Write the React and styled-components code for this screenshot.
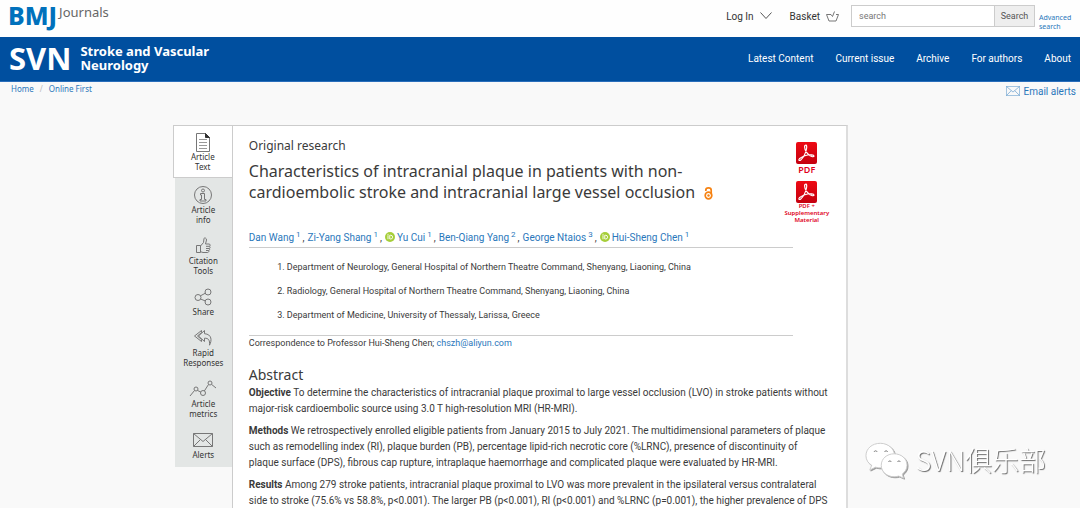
import styled, { createGlobalStyle } from "styled-components";

const GlobalStyle = createGlobalStyle`
  * {
    box-sizing: border-box;
  }

  body {
    margin: 0;
    background-color: #f9f9f9;
    color: #3a3a3a;
    font-family: "Noto Sans", "Open Sans", sans-serif;
    font-size: 11px;
    overflow: hidden;
  }

  a {
    color: #2a77bb;
    text-decoration: none;
  }

  p, h1, h2, ol, ul {
    margin: 0;
    padding: 0;
    font-weight: 400;
  }
`;

// ==========Header==================
const TopBar = styled.header`
  display: flex;
  justify-content: space-between;
  height: 37px;
  padding: 0 4px 0 8px;
  background-color: #fefefe;
`;

const Logo = styled.a`
  display: flex;
  align-items: flex-start;
  gap: 2px;
  line-height: 24px;

  .bmj {
    color: #0071bc;
    font-size: 25px;
    font-weight: 800;
    line-height: 30px;
  }

  .journals {
    color: #666;
    font-size: 13px;
  }
`;

const UserTools = styled.div`
  display: flex;
  align-items: flex-start;
  padding-top: 5px;
`;

const ToolButton = styled.button`
  display: flex;
  align-items: center;
  gap: 6px;
  height: 22px;
  margin-right: ${(props) => props.$space}px;
  padding: 0;
  border: none;
  background: none;
  color: #333;
  font-family: Roboto, sans-serif;
  font-size: 10px;
`;

const SearchForm = styled.form`
  display: flex;
  align-items: flex-start;

  input {
    width: 144px;
    height: 22px;
    padding: 0 7px;
    border: 1px solid #ccc;
    font-family: Roboto, sans-serif;
    font-size: 9px;

    &::placeholder {
      color: #777;
    }
  }

  button {
    width: 40px;
    height: 22px;
    padding: 0;
    border: 1px solid #ccc;
    border-left: none;
    background-color: #eee;
    color: #555;
    font-family: Roboto, sans-serif;
    font-size: 9px;
  }

  a {
    width: 37px;
    margin-left: 4px;
    padding-top: 8px;
    font-size: 7px;
    line-height: 9px;
  }
`;

const JournalBar = styled.div`
  display: flex;
  align-items: center;
  justify-content: space-between;
  height: 45px;
  padding: 0 9px 2px;
  border-bottom: 1px solid #2a6ebb;
  background-color: #004f9f;
  color: #fff;
`;

const JournalName = styled.div`
  display: flex;
  align-items: center;
  gap: 9px;
  font-weight: 700;

  .short {
    font-size: 31px;
    line-height: 40px;
  }

  .full {
    font-size: 13px;
    line-height: 14px;
  }
`;

const Nav = styled.nav`
  display: flex;
  gap: 22px;

  a {
    color: #fff;
    font-family: Roboto, sans-serif;
    font-size: 10px;
  }
`;

const Crumbs = styled.div`
  display: flex;
  justify-content: space-between;
  height: 43px;
  padding: 0 4px 0 11px;

  .trail {
    font-size: 8px;
    line-height: 13px;
  }

  .slash {
    margin: 0 6px;
    color: #bbb;
  }

  .alerts {
    display: flex;
    align-items: center;
    gap: 4px;
    height: 18px;
    font-family: Roboto, sans-serif;
    font-size: 10px;
  }
`;

// ==========Article==================
const Layout = styled.main`
  display: flex;
  align-items: flex-start;
  width: 62.5%;
  margin-left: 16%;
`;

const SideTabs = styled.nav`
  flex: none;
  width: 59px;
`;

const TabGroup = styled.div`
  margin-left: 2px;
  padding: 1px 0 2px;
  background-color: #e3e6e5;
`;

const Tab = styled.a`
  display: block;
  padding: 6px 0 5px;
  color: #333;
  font-size: 8px;
  line-height: 10px;
  text-align: center;

  svg {
    display: block;
    margin: 0 auto;
  }
`;

const ActiveTab = styled(Tab)`
  height: 53px;
  border: 1px solid #ccc;
  border-right: none;
  background-color: #fff;
`;

const Paper = styled.article`
  flex: 1;
  height: 383px;
  overflow: hidden;
  padding: 11px 18px 0 16px;
  border: 1px solid #ccc;
  border-right: 2px solid #ddd;
  border-bottom: none;
  background-color: #fff;
`;

const Intro = styled.div`
  display: flex;
  justify-content: space-between;
  height: 92px;

  .kind {
    font-size: 12px;
    line-height: 18px;
  }

  h1 {
    margin-top: 6px;
    font-size: 16px;
    line-height: 21px;
  }

  h1 svg {
    margin-left: 5px;
    vertical-align: -2px;
  }
`;

const Downloads = styled.div`
  display: flex;
  flex-direction: column;
  align-items: center;
  width: 42px;
  padding-top: 5px;

  a {
    display: flex;
    flex-direction: column;
    align-items: center;
    color: #e0001b;
    font-weight: 600;
    text-align: center;
  }

  .pdf {
    height: 39px;
    font-size: 9px;
    line-height: 11px;
  }

  .supp {
    font-size: 6px;
    line-height: 7px;
  }
`;

const Authors = styled.p`
  display: flex;
  align-items: center;
  margin-right: 35px;
  border-bottom: 1px solid #ccc;
  font-family: Roboto, sans-serif;
  font-size: 10px;
  line-height: 18px;
  white-space: nowrap;

  sup {
    margin-left: 2px;
    font-size: 8px;
    line-height: 8px;
    vertical-align: 4px;
  }

  svg {
    margin-right: 2px;
    vertical-align: -1px;
  }

  .comma {
    margin: 0 3px 0 2px;
  }
`;

const Affiliations = styled.ol`
  margin-right: 35px;
  padding: 7px 0 8px 38px;
  border-bottom: 1px solid #ccc;
  font-family: Roboto, sans-serif;
  font-size: 9px;
  line-height: 24px;
`;

const Correspondence = styled.p`
  font-family: Roboto, sans-serif;
  font-size: 9px;
  line-height: 15px;
`;

const AbstractTitle = styled.h2`
  margin-top: 14px;
  font-size: 14px;
  line-height: 20px;
`;

const Paragraph = styled.p`
  margin-bottom: 6px;
  font-family: Roboto, sans-serif;
  font-size: 10px;
  line-height: 16px;
  white-space: nowrap;

  b {
    font-weight: 700;
  }
`;

const Watermark = styled.div`
  position: fixed;
  right: 34px;
  bottom: 28px;
  display: flex;
  align-items: center;
  gap: 7px;
  color: #fff;
  font-family: "Noto Sans CJK SC", sans-serif;
  font-size: 27px;
  font-weight: 300;
  line-height: 40px;
  text-shadow: 1px 1px 1px #666;

  svg {
    filter: drop-shadow(1px 1px 0 #999);
  }
`;

// ===============icons======================
const MailIcon = ({ width, height, color }) => (
  <svg width={width} height={height} viewBox="0 0 20 14" fill="none" stroke={color} preserveAspectRatio="none">
    <path d="M.5 .5h19v13H.5zM.5 .5l9.5 8 9.5-8M.5 13.5l7-7M19.5 13.5l-7-7" />
  </svg>
);

const SideIcon = ({ children }) => (
  <svg width="28" height="20" viewBox="0 0 28 20" fill="none" stroke="#777" strokeWidth="1">
    {children}
  </svg>
);

const PdfIcon = () => (
  <svg width="21" height="22" viewBox="0 0 21 22">
    <defs>
      <linearGradient id="pdfRed" x1="0" y1="0" x2="0" y2="1">
        <stop offset="0" stopColor="#ee0a14" />
        <stop offset="1" stopColor="#c4000f" />
      </linearGradient>
    </defs>
    <rect width="21" height="22" rx="2" fill="url(#pdfRed)" />
    <path
      d="M9 3.5c1.600-1.500 2 1 1.500 3.500-.8 4-3.500 9-6 11.200-1.500.9-2.300-.4-.8-1.700 3-2.300 8-3.900 12-3.700 3.200.3 2.700 2.200.6 1.900C12.500 14 8.500 8.500 8.600 5c0-.7.100-1.200.400-1.500z"
      fill="none"
      stroke="#fff"
      strokeWidth="1.200"
    />
  </svg>
);

const OrcidIcon = () => (
  <svg width="10" height="10" viewBox="0 0 20 20">
    <circle cx="10" cy="10" r="10" fill="#a6ce39" />
    <path d="M6 6.500v8M9.500 6.500v7.500h2a3.700 3.700 0 0 0 0-7.500z" fill="none" stroke="#fff" strokeWidth="1.800" />
    <circle cx="6" cy="4.500" r="1.200" fill="#fff" />
  </svg>
);

const OpenAccessIcon = () => (
  <svg width="9" height="13" viewBox="0 0 9 13" fill="none" stroke="#f68212" strokeWidth="1.700">
    <circle cx="4.500" cy="8.500" r="3.300" />
    <path d="M1.800 4V3.200a2.700 2.300 0 0 1 5.400 0v4" />
    <circle cx="4.500" cy="8.500" r="1.200" fill="#f68212" stroke="none" />
  </svg>
);

const WechatIcon = () => (
  <svg width="43" height="37" viewBox="0 0 45 38" fill="#fff" stroke="#ccc" strokeWidth="1">
    <path d="M16 1C7.500 1 1 6.500 1 14c0 4.500 2.500 8 6 10l-2 5 6-3c2 .6 4 .8 6 .7C25 26 31 21 31 14S24.500 1 16 1z" />
    <path d="M9.500 10a1.700 1.700 0 0 1 3.200 0M20.500 10a1.700 1.700 0 0 1 3.200 0" stroke="#777" />
    <path d="M30.500 12C23 12 17 17 17 24s6 12 13.500 12c1.700 0 3.300-.2 4.800-.7l5 2.200-1.300-4.300c3-2.200 5-5.400 5-9.200 0-7-6-12-13.500-12z" />
    <path d="M24.500 20.500a1.600 1.600 0 0 1 3 0M34 20.500a1.600 1.600 0 0 1 3 0" stroke="#777" />
  </svg>
);

// ===============data======================
const navLinks = ["Latest Content", "Current issue", "Archive", "For authors", "About"];

const tabs = [
  {
    lines: ["Article", "info"],
    icon: (
      <>
        <circle cx="14" cy="10" r="8.500" />
        <circle cx="14" cy="5.500" r="1.500" />
        <path d="M11.500 8.500h4v6h1.500v1.500h-6v-1.500h1.500V10h-1z" />
      </>
    ),
  },
  {
    lines: ["Citation", "Tools"],
    icon: (
      <path d="M7.500 9.500h4v7h-4zM11.500 10l3-3.500.5-4c.2-1 2.500-.8 2.500 1.500L16.500 8H20c1.500 0 1.500 2 .5 2.300 1 .3.800 2-.3 2.200.8.400.5 1.800-.5 2 .5.800 0 1.800-1 2H14l-2.500-.8M17 10.300h3.500M17 12.500h3.200M17 14.500h2.700" />
    ),
  },
  {
    lines: ["Share"],
    icon: (
      <>
        <circle cx="9" cy="10.500" r="3" />
        <circle cx="19" cy="5" r="3" />
        <circle cx="19" cy="15" r="3" />
        <path d="M11.500 8.800l5-2.700M11.500 12l5 2" />
      </>
    ),
  },
  {
    lines: ["Rapid", "Responses"],
    icon: (
      <path d="M12.500 2.500l-7 5.500 7 5.500v-2l-4-3.500 4-3.500zM15.500 2.500l-6 5.500 6 5.500v-3.300c4-.2 5.500 2 5 7 2.500-4.500 2.500-11-5-11.500z" />
    ),
  },
  {
    lines: ["Article", "metrics"],
    icon: (
      <>
        <circle cx="7" cy="10" r="2" />
        <circle cx="14" cy="14" r="2.500" />
        <circle cx="21" cy="4" r="2" />
        <path d="M1 17l4.500-5.500M8.500 11.500l3.300 1.500M15.300 12l4.200-6.500M22.700 5.500L27 9" />
      </>
    ),
  },
  {
    lines: ["Alerts"],
    icon: <path d="M4.500 3.500h19v13h-19zM4.500 3.500l9.500 8 9.500-8M4.500 16.500l7-7M23.500 16.500l-7-7" />,
  },
];

const authors = [
  { name: "Dan Wang", mark: 1 },
  { name: "Zi-Yang Shang", mark: 1 },
  { name: "Yu Cui", mark: 1, orcid: true },
  { name: "Ben-Qiang Yang", mark: 2 },
  { name: "George Ntaios", mark: 3 },
  { name: "Hui-Sheng Chen", mark: 1, orcid: true },
];

// ===============component======================
const App = () => {
  return (
    <>
      <GlobalStyle />
      <TopBar>
        <Logo href="#">
          <span className="bmj">BMJ</span>
          <span className="journals">Journals</span>
        </Logo>
        <UserTools>
          <ToolButton $space={18}>
            Log In
            <svg width="12" height="8" viewBox="0 0 12 8" fill="none" stroke="#555">
              <path d="M.5 .5L6 6.500 11.500 .5" />
            </svg>
          </ToolButton>
          <ToolButton $space={12}>
            Basket
            <svg width="13" height="11" viewBox="0 0 13 11" fill="none" stroke="#777">
              <path d="M5 3.500H.5L3 10h7l2.500-6.500H10M5 3.500l1.500 2L8.500 .5" />
            </svg>
          </ToolButton>
          <SearchForm>
            <input type="text" placeholder="search" aria-label="search" />
            <button type="button">Search</button>
            <a href="#">Advanced search</a>
          </SearchForm>
        </UserTools>
      </TopBar>
      <JournalBar>
        <JournalName>
          <span className="short">SVN</span>
          <span className="full">
            Stroke and Vascular
            <br />
            Neurology
          </span>
        </JournalName>
        <Nav>
          {navLinks.map((link) => (
            <a href="#" key={link}>
              {link}
            </a>
          ))}
        </Nav>
      </JournalBar>
      <Crumbs>
        <div className="trail">
          <a href="#">Home</a>
          <span className="slash">/</span>
          <a href="#">Online First</a>
        </div>
        <a className="alerts" href="#">
          <MailIcon width={14} height={10} color="#6aa0cf" />
          Email alerts
        </a>
      </Crumbs>

      <Layout>
        <SideTabs>
          <ActiveTab href="#">
            <SideIcon>
              <path d="M7.500 1.500h9l4 4v14h-13z" fill="#fff" />
              <path d="M16.500 1.500v4h4z" fill="#333" stroke="#333" />
              <path d="M10 7.500h8M10 10.500h8M10 13.500h8M10 16.500h8" stroke="#999" />
            </SideIcon>
            Article
            <br />
            Text
          </ActiveTab>
          <TabGroup>
            {tabs.map((tab) => (
              <Tab href="#" key={tab.lines.join(" ")}>
                <SideIcon>{tab.icon}</SideIcon>
                {tab.lines[0]}
                {tab.lines[1] && <br />}
                {tab.lines[1]}
              </Tab>
            ))}
          </TabGroup>
        </SideTabs>

        <Paper>
          <Intro>
            <div>
              <p className="kind">Original research</p>
              <h1>
                Characteristics of intracranial plaque in patients with non-
                <br />
                cardioembolic stroke and intracranial large vessel occlusion <OpenAccessIcon />
              </h1>
            </div>
            <Downloads>
              <a className="pdf" href="#">
                <PdfIcon />
                PDF
              </a>
              <a className="supp" href="#">
                <PdfIcon />
                PDF + Supplementary Material
              </a>
            </Downloads>
          </Intro>
          <Authors>
            {authors.map((author, index) => (
              <span key={author.name}>
                {author.orcid && <OrcidIcon />}
                <a href="#">
                  {author.name}
                  <sup>{author.mark}</sup>
                </a>
                {index < authors.length - 1 && <span className="comma">,</span>}
              </span>
            ))}
          </Authors>
          <Affiliations>
            <li>Department of Neurology, General Hospital of Northern Theatre Command, Shenyang, Liaoning, China</li>
            <li>Radiology, General Hospital of Northern Theatre Command, Shenyang, Liaoning, China</li>
            <li>Department of Medicine, University of Thessaly, Larissa, Greece</li>
          </Affiliations>
          <Correspondence>
            Correspondence to Professor Hui-Sheng Chen; <a href="#">chszh@aliyun.com</a>
          </Correspondence>
          <AbstractTitle>Abstract</AbstractTitle>
          <Paragraph>
            <b>Objective</b> To determine the characteristics of intracranial plaque proximal to large vessel occlusion
            (LVO) in stroke patients without
            <br />
            major-risk cardioembolic source using 3.0 T high-resolution MRI (HR-MRI).
          </Paragraph>
          <Paragraph>
            <b>Methods</b> We retrospectively enrolled eligible patients from January 2015 to July 2021. The
            multidimensional parameters of plaque
            <br />
            such as remodelling index (RI), plaque burden (PB), percentage lipid-rich necrotic core (%LRNC), presence of
            discontinuity of
            <br />
            plaque surface (DPS), fibrous cap rupture, intraplaque haemorrhage and complicated plaque were evaluated by
            HR-MRI.
          </Paragraph>
          <Paragraph>
            <b>Results</b> Among 279 stroke patients, intracranial plaque proximal to LVO was more prevalent in the
            ipsilateral versus contralateral
            <br />
            side to stroke (75.6% vs 58.8%, p&lt;0.001). The larger PB (p&lt;0.001), RI (p&lt;0.001) and %LRNC (p=0.001),
            the higher prevalence of DPS
          </Paragraph>
        </Paper>
      </Layout>

      <Watermark>
        <WechatIcon />
        SVN俱乐部
      </Watermark>
    </>
  );
};

export default App;
